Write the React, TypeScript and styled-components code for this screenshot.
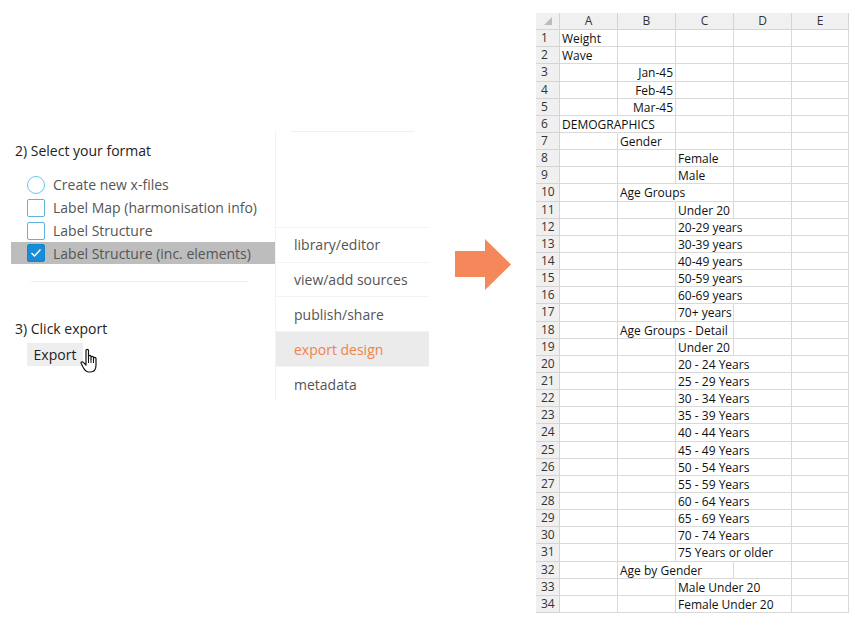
import React from "react";
import styled, { createGlobalStyle } from "styled-components";

const G = createGlobalStyle`
  body { margin: 0; background: #fff; }
  #root { width: 855px; height: 626px; position: relative; overflow: hidden; }
`;

const Page = styled.div`
  display: flex; width: 855px; height: 626px; font-family: "Open Sans", "Noto Sans", sans-serif;
`;
const Left = styled.div`
  width: 275px; padding-top: 141px; display: flex; flex-direction: column;
`;
const Heading = styled.div`
  font-size: 14px; color: #222; padding-left: 15px; height: 20px; line-height: 20px;
`;
const Options = styled.div`
  display: flex; flex-direction: column; margin-top: 12px; margin-left: 11px;
`;
const Option = styled.div<{ $sel?: boolean }>`
  display: flex; align-items: center; gap: 8px; height: ${p => p.$sel ? 22 : 23}px; padding-left: 16px;
  background: ${p => p.$sel ? "#bdbdbd" : "transparent"};
  font-size: 14px; color: #555;
`;
const Radio = styled.span`
  border: 1.5px solid #6cc6ec; border-radius: 50%; box-sizing: border-box; width: 18px; height: 18px;
`;
const Check = styled.span<{ $on?: boolean }>`
  width: 18px; height: 18px; box-sizing: border-box; border: 1px solid ${p => p.$on ? "#0f86d0" : "#5fb3e0"};
  border-radius: 2px; background: ${p => p.$on ? "#1a8bd6" : "#fff"}; display: flex; align-items: center; justify-content: center;
`;
const Divider = styled.div`
  height: 1px; background: #f0f0f0; margin: 17px 0 0 31px; width: 217px;
`;
const Button = styled.div`
  margin: 4px 0 0 27px; width: 56px; height: 23px; background: #eeeeee; font-size: 14px; color: #222;
  display: flex; align-items: center; justify-content: center; position: relative;
`;
const Hand = styled.svg`
  position: absolute; left: 53px; top: 5px;
`;
const Menu = styled.div`
  width: 153px; margin-top: 131px; height: 270px; border-left: 1px solid #f3f3f3; display: flex; flex-direction: column;
`;
const TopLine = styled.div`
  height: 1px; background: #f0f0f0; margin-left: 15px; width: 123px;
`;
const Spacer = styled.div`
  height: 98px; border-bottom: 1px solid #f3f3f3;
`;
const Item = styled.div<{ $act?: boolean }>`
  height: 35px; display: flex; align-items: center; padding-left: 18px; font-size: 14px;
  color: ${p => p.$act ? "#f0824b" : "#555"}; background: ${p => p.$act ? "#ebebeb" : "transparent"};
  border-bottom: 1px solid #f3f3f3;
`;
const ArrowBox = styled.div`
  width: 107px; display: flex; justify-content: center; padding-top: 239px;
`;
const SheetWrap = styled.div`
  margin-top: 13px;
`;
const Grid = styled.div`
  display: grid; grid-template-columns: 24px 58px 58px 58px 58px 57px; grid-auto-rows: 17.15px;
  font-family: "Open Sans", "Noto Sans", sans-serif; font-size: 12px; color: #111;
`;
const Head = styled.div<{ $left?: boolean }>`
  background: #f0f0f0; border-right: 1px solid #d4d4d4; border-bottom: 1px solid #d4d4d4; box-sizing: border-box;
  display: flex; align-items: center; justify-content: ${p => p.$left ? "flex-start" : "center"};
  padding-left: ${p => p.$left ? 5 : 0}px; color: #333; line-height: 1;
`;
const Cell = styled.div<{ $right?: boolean; $over?: boolean }>`
  border-right: 1px solid ${p => p.$over ? "transparent" : "#d9d9d9"}; border-bottom: 1px solid #d9d9d9; box-sizing: border-box;
  padding: 1px 2px 0; white-space: nowrap; overflow: visible; line-height: 16px; text-align: ${p => p.$right ? "right" : "left"};
  position: relative; z-index: 1;
`;

type R = [number, string?];
const data: Record<number, R> = {
  1: [0, "Weight"], 2: [0, "Wave"], 3: [-1, "Jan-45"], 4: [-1, "Feb-45"], 5: [-1, "Mar-45"], 6: [0, "DEMOGRAPHICS"],
  7: [1, "Gender"], 8: [2, "Female"], 9: [2, "Male"], 10: [1, "Age Groups"], 11: [2, "Under 20"], 12: [2, "20-29 years"],
  13: [2, "30-39 years"], 14: [2, "40-49 years"], 15: [2, "50-59 years"], 16: [2, "60-69 years"], 17: [2, "70+ years"],
  18: [1, "Age Groups - Detail"], 19: [2, "Under 20"], 20: [2, "20 - 24 Years"], 21: [2, "25 - 29 Years"], 22: [2, "30 - 34 Years"],
  23: [2, "35 - 39 Years"], 24: [2, "40 - 44 Years"], 25: [2, "45 - 49 Years"], 26: [2, "50 - 54 Years"], 27: [2, "55 - 59 Years"],
  28: [2, "60 - 64 Years"], 29: [2, "65 - 69 Years"], 30: [2, "70 - 74 Years"], 31: [2, "75 Years or older"], 32: [1, "Age by Gender"],
  33: [2, "Male Under 20"], 34: [2, "Female Under 20"],
};

function Sheet() {
  const cells: React.ReactNode[] = [];
  cells.push(<Head key="c"><svg width="8" height="8"><polygon points="8,0 8,8 0,8" fill="#bbb" /></svg></Head>);
  ["A", "B", "C", "D", "E"].forEach(l => cells.push(<Head key={l}>{l}</Head>));
  for (let r = 1; r <= 34; r++) {
    const [col, txt] = data[r];
    cells.push(<Head key={"h" + r} $left>{r}</Head>);
    for (let c = 0; c < 5; c++) {
      let content: React.ReactNode = null; let right = false; let over = false;
      if (col === -1 && c === 1) { content = txt; right = true; }
      else if (col === c) { content = txt; over = (txt?.length ?? 0) > 9; }
      cells.push(<Cell key={r + "-" + c} $right={right} $over={over}>{content}</Cell>);
    }
  }
  return <Grid>{cells}</Grid>;
}

const Tick = () => (
  <svg width="12" height="10" viewBox="0 0 12 10"><path d="M1.5 5 L4.5 8 L10.5 1.5" stroke="#fff" strokeWidth="1.4" fill="none" /></svg>
);

export default function App() {
  return (
    <Page>
      <G />
      <Left>
        <Heading>2) Select your format</Heading>
        <Options>
          <Option><Radio />Create new x-files</Option>
          <Option><Check />Label Map (harmonisation info)</Option>
          <Option><Check />Label Structure</Option>
          <Option $sel><Check $on><Tick /></Check>Label Structure (inc. elements)</Option>
        </Options>
        <Divider />
        <Heading style={{ marginTop: 37 }}>3) Click export</Heading>
        <Button>Export
          <Hand width="20" height="26" viewBox="0 0 20 26">
            <path d="M6 2.5 C6 1 8.5 1 8.5 2.5 L8.5 11 L8.5 8.5 C8.5 7 11 7 11 8.5 L11 11 L11 9.5 C11 8 13.5 8 13.5 9.5 L13.5 11.5 L13.5 10.5 C13.5 9 16 9 16 10.5 L16 17 C16 21 14 24 10.5 24 L9 24 C6.5 24 5 22.5 3.5 20 L1.2 15.5 C0.6 14.2 2.3 13.2 3.3 14.3 L6 17 Z" fill="#fff" stroke="#111" strokeWidth="1.2" strokeLinejoin="round" />
            <path d="M8.5 11 V15 M11 11 V15 M13.5 11.5 V15" stroke="#111" strokeWidth="1" />
          </Hand>
        </Button>
      </Left>
      <Menu>
        <TopLine />
        <Spacer />
        <Item>library/editor</Item>
        <Item>view/add sources</Item>
        <Item>publish/share</Item>
        <Item $act>export design</Item>
        <Item style={{ borderBottom: "none" }}>metadata</Item>
      </Menu>
      <ArrowBox>
        <svg width="56" height="51" viewBox="0 0 56 51"><polygon points="0,12 30,12 30,0 56,25.5 30,51 30,38 0,38" fill="#f4885a" /></svg>
      </ArrowBox>
      <SheetWrap><Sheet /></SheetWrap>
    </Page>
  );
}
